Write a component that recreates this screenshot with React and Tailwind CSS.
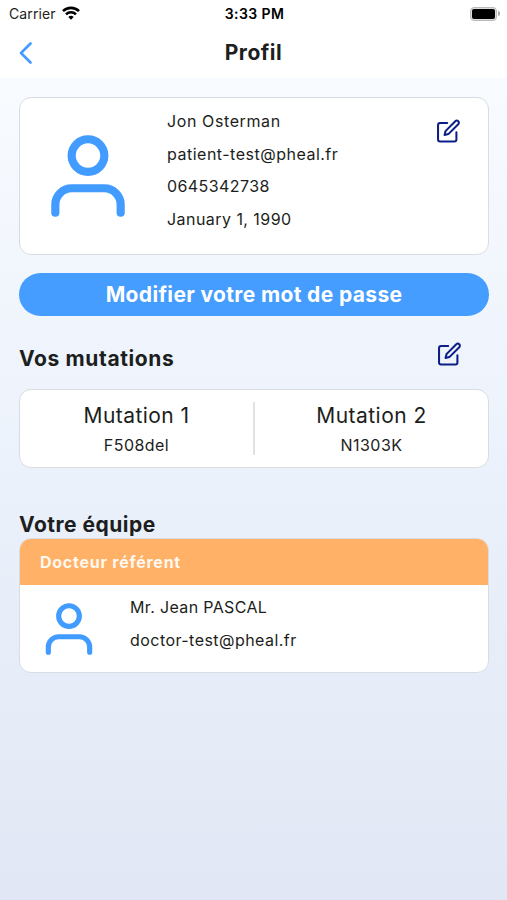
const UserIcon = ({ className }) => (
  <svg viewBox="0 0 24 24" fill="none" stroke="#429bff" strokeWidth="2" strokeLinecap="round" strokeLinejoin="round" className={className}>
    <path d="M20 21v-2a4 4 0 0 0-4-4H8a4 4 0 0 0-4 4v2" />
    <circle cx="12" cy="7" r="4" />
  </svg>
);

const EditIcon = ({ className }) => (
  <svg viewBox="0 0 24 24" fill="none" stroke="#0b1f86" strokeWidth="2" strokeLinecap="round" strokeLinejoin="round" className={className}>
    <path d="M11 4H4a2 2 0 0 0-2 2v14a2 2 0 0 0 2 2h14a2 2 0 0 0 2-2v-7" />
    <path d="M18.9 2.2a2.05 2.05 0 0 1 2.9 2.9L12.1 14.8l-3.7.9.9-3.8z" />
  </svg>
);

const StatusBar = () => (
  <div className="grid h-[27px] grid-cols-3 items-center pr-[7px] pl-[9px] font-['Inter',sans-serif] text-black">
    <div className="flex items-center gap-[6px]">
      <span className="text-[14px] tracking-[0.1px] text-[#222]">Carrier</span>
      <svg viewBox="0 0 18 14" className="-mt-0.5 h-[14px] w-[18px]" fill="none" stroke="#000" strokeWidth="2.6">
        <path d="M1 5.2a11.3 11.3 0 0 1 16 0" />
        <path d="M4 8.4a7 7 0 0 1 10 0" />
        <path d="M9 13.8 6.3 11a3.8 3.8 0 0 1 5.4 0z" fill="#000" stroke="none" />
      </svg>
    </div>
    <span className="text-center text-[14px] font-semibold tracking-[0.4px] whitespace-nowrap">3:33 PM</span>
    <div className="flex items-center justify-end gap-px">
      <div className="h-[14px] w-[27px] rounded-[4px] border border-[#bbb] bg-[#ddd] p-px">
        <div className="h-full rounded-[2px] bg-black" />
      </div>
      <div className="h-[5px] w-[2px] rounded-r-full bg-[#aaa]" />
    </div>
  </div>
);

const Mutation = ({ title, value }) => (
  <div className="flex flex-1 flex-col items-center pt-[10px]">
    <span className="text-[21px] leading-[32px] tracking-[0.45px]">{title}</span>
    <span className="text-[16px] leading-[27px] tracking-[0.45px]">{value}</span>
  </div>
);

export default function App() {
  return (
    <div className="flex h-[900px] w-[507px] flex-col overflow-hidden bg-white font-['Inter',sans-serif] whitespace-nowrap text-[#1c1e20]">
      <StatusBar />
      <header className="grid h-[51px] shrink-0 grid-cols-3 items-center">
        <svg viewBox="0 0 14 22" className="ml-[19px] h-[22px] w-[14px]" fill="none" stroke="#429bff" strokeWidth="2.6" strokeLinecap="round" strokeLinejoin="round">
          <path d="M11.5 1.5 2 11l9.5 9.5" />
        </svg>
        <h1 className="text-center text-[21px] font-bold tracking-[0.5px]">Profil</h1>
      </header>
      <main className="flex flex-1 flex-col bg-linear-to-b from-[#f8fbff] via-[#ebf1fb] to-[#e1e7f4] pt-[19px] pr-[18px] pl-[19px]">
        <section className="flex h-[158px] rounded-[12px] border border-[#d9dce1] bg-white">
          <UserIcon className="mt-[29px] ml-[19px] size-[98px]" />
          <div className="mt-[7px] ml-[30px] flex-1 text-[16px] leading-[32.6px]">
            <p className="tracking-[0.6px]">Jon Osterman</p>
            <p className="tracking-[0.5px]">patient-test@pheal.fr</p>
            <p className="tracking-[0.42px]">0645342738</p>
            <p className="tracking-[0.45px]">January 1, 1990</p>
          </div>
          <EditIcon className="mt-[21px] mr-[28px] size-[24.5px]" />
        </section>
        <button className="mt-[18px] h-[43px] rounded-full bg-[#459dff] text-[21px] font-bold tracking-[0.36px] text-white">Modifier votre mot de passe</button>
        <div className="mt-[26px] flex h-[32px] items-start justify-between pr-[28px]">
          <h2 className="pt-px text-[21px] leading-[32px] font-bold tracking-[0.62px]">Vos mutations</h2>
          <EditIcon className="size-[24.5px]" />
        </div>
        <section className="mt-[15px] flex h-[79px] rounded-[12px] border border-[#d9dce1] bg-white">
          <Mutation title="Mutation 1" value="F508del" />
          <div className="mt-3 h-[53px] w-[2px] bg-[#dfe1e5]" />
          <Mutation title="Mutation 2" value="N1303K" />
        </section>
        <h2 className="mt-[43px] text-[21px] leading-[27px] font-bold tracking-[0.5px]">Votre équipe</h2>
        <section className="h-[135px] overflow-hidden rounded-[12px] border border-[#d9dce1] bg-white">
          <div className="flex h-[46px] items-center bg-[#ffb167] pl-[20px] text-[16px] font-bold tracking-[0.75px] text-[#fff8ee]">Docteur référent</div>
          <div className="flex">
            <UserIcon className="mt-[13px] ml-[18px] size-[62px]" />
            <div className="mt-[6px] ml-[30px] text-[16px] leading-[32.6px]">
              <p className="tracking-[0.35px]">Mr. Jean PASCAL</p>
              <p className="tracking-[0.45px]">doctor-test@pheal.fr</p>
            </div>
          </div>
        </section>
      </main>
    </div>
  );
}
